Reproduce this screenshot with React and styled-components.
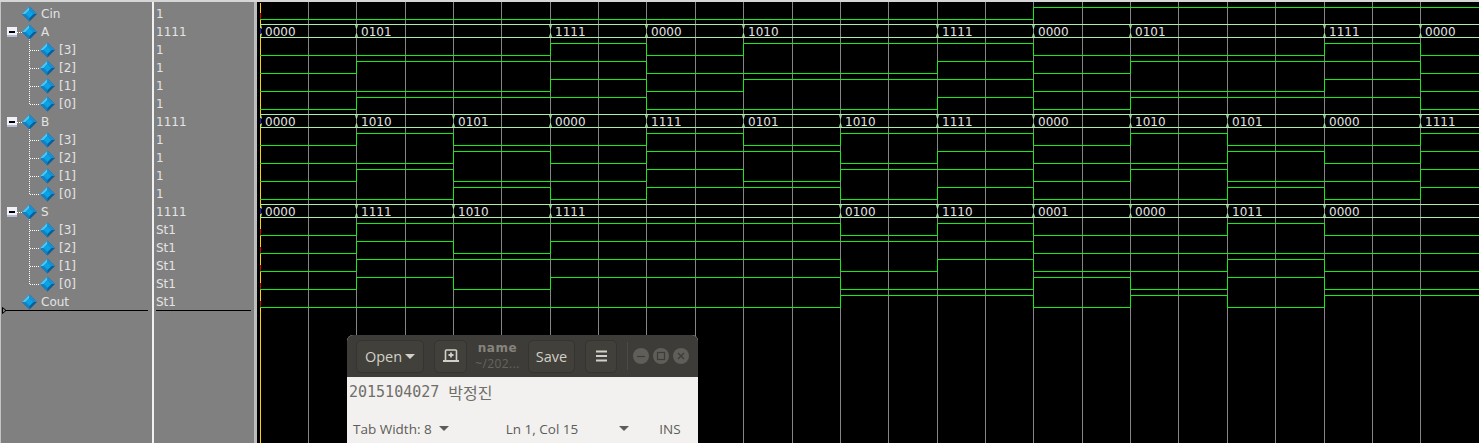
import React from 'react';
import styled, { createGlobalStyle } from 'styled-components';

const GlobalStyle = createGlobalStyle`
    html, body {
        margin: 0;
        padding: 0;
        background: #000;
    }
`;

const Page = styled.div`
    position: relative;
    width: 1479px;
    height: 443px;
    overflow: hidden;
    display: flex;
    flex-direction: column;
    font-family: "DejaVu Sans", sans-serif;
`;
const TopEdge = styled.div`
    height: 2px;
    flex: none;
    background: #d6d6d6;
`;
const Viewer = styled.div`
    flex: 1;
    display: flex;
    min-height: 0;
`;
const Pane = styled.div`
    flex: none;
    box-sizing: border-box;
    width: ${props => props.$width}px;
    padding: 3px 0 0 ${props => props.$pad}px;
    background: #808080;
    border-left: ${props => props.$edge}px solid #c4c4c4;
`;
const Divider = styled.div`
    flex: none;
    width: ${props => props.$width}px;
    background: ${props => props.$color};
`;
const Row = styled.div`
    height: 18px;
    display: flex;
    align-items: center;
    gap: 4px;
    font-size: 12px;
    line-height: 18px;
    color: #e4e4e4;
    white-space: nowrap;
`;
const Ruler = styled.div`
    position: relative;
    height: 1px;
    margin: -1px ${props => props.$right}px 0 ${props => props.$left}px;
    background: #000;
`;
const Notch = styled.svg`
    position: absolute;
    left: -3px;
    top: -3px;
`;
const Waves = styled.svg`
    flex: 1;
    display: block;
    background: #000;
`;

const Editor = styled.div`
    position: absolute;
    left: 347px;
    top: 335px;
    width: 351px;
    height: 108px;
    display: flex;
    flex-direction: column;
    background: #f2f1f0;
    border-radius: 6px 6px 0 0;
    font-family: "Open Sans", "Noto Sans", sans-serif;
`;
const HeaderBar = styled.div`
    box-sizing: border-box;
    height: 42px;
    flex: none;
    display: flex;
    align-items: center;
    padding: 0 9px;
    background: #3e3c38;
    border-radius: 6px 6px 0 0;
`;
const HeaderButton = styled.div`
    box-sizing: border-box;
    width: ${props => props.$width}px;
    height: 33px;
    flex: none;
    margin-right: ${props => props.$after || 0}px;
    display: flex;
    align-items: center;
    justify-content: center;
    gap: 3px;
    border: 1px solid #35342f;
    border-radius: 5px;
    background: #41403b;
    color: #d2d0c8;
    font-size: 14.5px;
`;
const TitleBlock = styled.div`
    width: 61px;
    flex: none;
    display: flex;
    flex-direction: column;
    align-items: center;
`;
const FileName = styled.div`
    font-family: "DejaVu Sans", sans-serif;
    font-size: 12px;
    font-weight: 700;
    line-height: 15px;
    letter-spacing: 0.6px;
    color: #86847c;
`;
const FilePath = styled.div`
    font-size: 12px;
    line-height: 15px;
    letter-spacing: 0.4px;
    color: #66645e;
`;
const Separator = styled.div`
    width: 1px;
    height: 28px;
    flex: none;
    margin: 0 5px 0 10px;
    background: #4c4a45;
`;
const WindowDot = styled.div`
    width: 16px;
    height: 16px;
    flex: none;
    margin-right: 4px;
    display: flex;
    align-items: center;
    justify-content: center;
    border-radius: 50%;
    background: #5f5e58;
`;
const Caret = styled.div`
    width: 0;
    height: 0;
    flex: none;
    margin-left: ${props => props.$left || 0}px;
    border-left: 5px solid transparent;
    border-right: 5px solid transparent;
    border-top: 5px solid ${props => props.$color || '#5e5c56'};
`;
const TextLine = styled.div`
    flex: 1;
    padding: 5px 0 0 2px;
    display: flex;
    align-items: flex-start;
    gap: 9px;
    color: #706e68;
    line-height: 20px;
`;
const MonoText = styled.span`
    font-family: "DejaVu Sans Mono", monospace;
    font-size: 15px;
`;
const HangulText = styled.span`
    font-family: "Noto Sans CJK KR", sans-serif;
    font-size: 16px;
`;
const StatusBar = styled.div`
    height: 29px;
    flex: none;
    display: flex;
    align-items: center;
    padding-left: 6px;
    box-sizing: border-box;
    font-size: 13.5px;
    color: #5e5c56;
`;
const StatusText = styled.span`
    margin-left: ${props => props.$left || 0}px;
    white-space: nowrap;
`;

const GREEN = '#10f010';
const PALE = '#a8f0a8';
const PERIOD = 96.73;
const START = 260;
const ORIGIN = 257;
const WIDTH = 1479 - ORIGIN;

const busA = ['0000', '0101', '0101', '1111', '0000', '1010', '1010', '1111', '0000', '0101', '0101', '1111', '0000'];
const busB = ['0000', '1010', '0101', '0000', '1111', '0101', '1010', '1111', '0000', '1010', '0101', '0000', '1111'];
const busS = ['0000', '1111', '1010', '1111', '1111', '1111', '0100', '1110', '0001', '0000', '1011', '0000', '0000'];
const cin = [0, 0, 0, 0, 0, 0, 0, 0, 1, 1, 1, 1, 1];
const cout = [0, 0, 0, 0, 0, 0, 1, 1, 0, 1, 0, 1, 1];

const bitOf = (bus, index) => bus.map(value => Number(value[index]));
const edgeX = i => Math.floor(START + PERIOD * i);

const group = (name, value, bus, bitValue, tint) => [
    { name, value, bus, kind: 'parent' },
    ...[0, 1, 2, 3].map(i => ({
        name: `[${3 - i}]`,
        value: bitValue,
        bits: bitOf(bus, i),
        kind: i === 3 ? 'lastChild' : 'child',
        red: tint,
    })),
];

const signals = [
    { name: 'Cin', value: '1', bits: cin, kind: 'plain', red: true },
    ...group('A', '1111', busA, '1', false),
    ...group('B', '1111', busB, '1', false),
    ...group('S', '1111', busS, 'St1', true),
    { name: 'Cout', value: 'St1', bits: cout, kind: 'plain', red: true },
];

const Diamond = ({ cx }) => (
    <g>
        <polygon points={`${cx - 7.5},9 ${cx},1.5 ${cx + 7.5},9 ${cx},16.5`} fill="#0a5f98" />
        <polygon points={`${cx - 7.5},9 ${cx},1.5 ${cx},5 ${cx - 4},9`} fill="#4cc6f2" />
        <polygon points={`${cx},1.5 ${cx + 7.5},9 ${cx + 4},9 ${cx},5`} fill="#1c8fd2" />
        <polygon points={`${cx - 7.5},9 ${cx - 4},9 ${cx},13 ${cx},16.5`} fill="#1580c4" />
        <polygon points={`${cx - 4},9 ${cx},5 ${cx + 4},9 ${cx},13`} fill="#08a4e6" />
    </g>
);

const TreeIcon = ({ kind }) => {
    const nested = kind === 'child' || kind === 'lastChild';
    const width = nested ? 54 : 36;
    return (
        <svg width={width} height="18" style={{ flex: 'none' }}>
            {kind === 'parent' && (
                <g>
                    <line x1="16" y1="9.5" x2="22" y2="9.5" stroke="#fff" strokeDasharray="1 1" />
                    <line x1="28.5" y1="14" x2="28.5" y2="18" stroke="#fff" strokeDasharray="1 1" />
                    <rect x="6" y="4" width="10" height="10" fill="#f0f0f8" />
                    <rect x="6" y="12" width="10" height="2" fill="#b4b8d0" />
                    <rect x="8" y="8" width="6" height="2" fill="#000" />
                </g>
            )}
            {nested && (
                <g>
                    <line x1="28.5" y1="0" x2="28.5" y2={kind === 'child' ? 18 : 9} stroke="#fff" strokeDasharray="1 1" />
                    <line x1="29" y1="9.5" x2="40" y2="9.5" stroke="#fff" strokeDasharray="1 1" />
                </g>
            )}
            <Diamond cx={nested ? 46.5 : 28.5} />
        </svg>
    );
};

const BitWave = ({ signal, row }) => {
    const high = 7 + 18 * row + 0.5;
    const low = 19 + 18 * row + 0.5;
    let d = `M${START} ${signal.bits[0] ? high : low}`;
    signal.bits.forEach((bit, i) => {
        const x = edgeX(i + 1) + 0.5;
        const y = bit ? high : low;
        d += ` L${Math.min(x, 1480)} ${y}`;
        const next = signal.bits[i + 1];
        if (next !== undefined && next !== bit) d += ` L${x} ${next ? high : low}`;
    });
    return (
        <g>
            <path d={d} fill="none" stroke={GREEN} />
            {signal.red && <rect x="260" y={low - 6.5} width="1" height="6" fill="#e00000" />}
        </g>
    );
};

const BusWave = ({ signal, row }) => {
    const top = 6 + 18 * row + 0.5;
    const bottom = 19 + 18 * row + 0.5;
    const starts = signal.bus
        .map((value, i) => ({ value, i }))
        .filter(({ value, i }) => i === 0 || signal.bus[i - 1] !== value);
    return (
        <g>
            <path d={`M261 ${top} H1480 M261 ${bottom} H1480`} stroke={PALE} fill="none" />
            <rect x="260" y={top + 3.5} width="1" height="6" fill="#2020c0" />
            {starts.map(({ value, i }) => {
                const x = i === 0 ? 261 : edgeX(i);
                return (
                    <g key={i}>
                        <path
                            d={`M${x - 0.5} ${top} L${x + 0.5} ${top + 4} M${x + 0.5} ${bottom - 4} L${x - 0.5} ${bottom}${i === 0 ? '' : ` M${x + 1.5} ${top} L${x + 0.5} ${top + 4} M${x + 0.5} ${bottom - 4} L${x + 1.5} ${bottom}`}`}
                            stroke={PALE}
                            fill="none"
                        />
                        <text
                            x={(i === 0 ? 260 : x) + 5}
                            y={18 + 18 * row}
                            fontFamily='"DejaVu Sans", sans-serif'
                            fontSize="12"
                            fill="#e4e4e4"
                        >
                            {value}
                        </text>
                    </g>
                );
            })}
        </g>
    );
};

const WavePanel = () => {
    const grid = Array.from({ length: 25 }, (_, k) => Math.floor(START + (PERIOD / 2) * k)).filter(x => x > START);
    return (
        <Waves width={WIDTH} height="441" viewBox={`${ORIGIN} 2 ${WIDTH} 441`}>
            {grid.map(x => (
                <line key={x} x1={x + 0.5} y1="2" x2={x + 0.5} y2="443" stroke="#858585" />
            ))}
            <line x1="260.5" y1="3" x2="260.5" y2="443" stroke="#ffd200" />
            {signals.map((signal, row) =>
                signal.bus ? <BusWave key={row} signal={signal} row={row} /> : <BitWave key={row} signal={signal} row={row} />
            )}
        </Waves>
    );
};

const App = () => {
    return (
        <Page>
            <GlobalStyle />
            <TopEdge />
            <Viewer>
                <Pane $width={152} $pad={0} $edge={1}>
                    {signals.map((signal, i) => (
                        <Row key={i}>
                            <TreeIcon kind={signal.kind} />
                            <span>{signal.name}</span>
                        </Row>
                    ))}
                    <Ruler $left={4} $right={4}>
                        <Notch width="5" height="7">
                            <path d="M0.5 0.5 L4 3.5 L0.5 6.5 Z" fill="none" stroke="#000" />
                        </Notch>
                    </Ruler>
                </Pane>
                <Divider $width={2} $color="#f0f0f0" />
                <Pane $width={100} $pad={2} $edge={0}>
                    {signals.map((signal, i) => (
                        <Row key={i}>{signal.value}</Row>
                    ))}
                    <Ruler $left={0} $right={3} />
                </Pane>
                <Divider $width={3} $color="#bdbdbd" />
                <WavePanel />
            </Viewer>
            <Editor>
                <HeaderBar>
                    <HeaderButton $width={68} $after={10}>
                        Open
                        <Caret $color="#d2d0c8" />
                    </HeaderButton>
                    <HeaderButton $width={33}>
                        <svg width="16" height="14" viewBox="0 0 16 14" fill="none" stroke="#d2d0c8">
                            <path d="M2.5 11 V2 Q2.5 1 3.5 1 H12.5 Q13.5 1 13.5 2 V11" strokeWidth="1.6" />
                            <path d="M8 3.5 V8.5 M5.5 6 H10.5" strokeWidth="1.8" />
                            <path d="M0 12 H16" strokeWidth="2" />
                        </svg>
                    </HeaderButton>
                    <TitleBlock>
                        <FileName>name</FileName>
                        <FilePath>~/202...</FilePath>
                    </TitleBlock>
                    <HeaderButton $width={47} $after={10}>Save</HeaderButton>
                    <HeaderButton $width={32}>
                        <svg width="11" height="12" viewBox="0 0 11 12" fill="#d2d0c8">
                            <rect x="0" y="0.5" width="11" height="2" />
                            <rect x="0" y="5" width="11" height="2" />
                            <rect x="0" y="9.5" width="11" height="2" />
                        </svg>
                    </HeaderButton>
                    <Separator />
                    <WindowDot>
                        <svg width="10" height="10" fill="none" stroke="#3e3c38" strokeWidth="1.2">
                            <path d="M1 5.5 H9" />
                        </svg>
                    </WindowDot>
                    <WindowDot>
                        <svg width="10" height="10" fill="none" stroke="#3e3c38" strokeWidth="1.2">
                            <rect x="1.5" y="1.5" width="7" height="7" />
                        </svg>
                    </WindowDot>
                    <WindowDot>
                        <svg width="10" height="10" fill="none" stroke="#3e3c38" strokeWidth="1.4">
                            <path d="M2 2 L8 8 M8 2 L2 8" />
                        </svg>
                    </WindowDot>
                </HeaderBar>
                <TextLine>
                    <MonoText>2015104027</MonoText>
                    <HangulText>박정진</HangulText>
                </TextLine>
                <StatusBar>
                    <StatusText>Tab Width: 8</StatusText>
                    <Caret $left={7} />
                    <StatusText $left={57}>Ln 1, Col 15</StatusText>
                    <Caret $left={41} />
                    <StatusText $left={30}>INS</StatusText>
                </StatusBar>
            </Editor>
        </Page>
    );
};

export default App;
